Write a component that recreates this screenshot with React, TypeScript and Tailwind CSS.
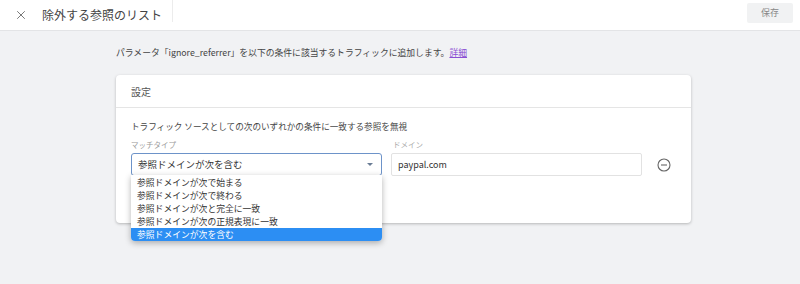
import { X } from "lucide-react";

const options = [
  "参照ドメインが次で始まる",
  "参照ドメインが次で終わる",
  "参照ドメインが次と完全に一致",
  "参照ドメインが次の正規表現に一致",
  "参照ドメインが次を含む",
];

export default function App() {
  return (
    <div
      className="w-[800px] h-[284px] bg-[#f1f2f4] text-[#3c4043] overflow-hidden"
      style={{ fontFamily: '"Noto Sans CJK JP", "Noto Sans", sans-serif' }}
    >
      {/* Header */}
      <div className="h-[31px] bg-white border-b border-[#e3e4e6] flex items-center">
        <X className="ml-[14px] w-[14px] h-[14px] text-[#666]" strokeWidth={1.5} />
        <div className="ml-[14px] text-[12px] text-[#444] leading-none">除外する参照のリスト</div>
        <div className="ml-[10px] w-px h-[22px] self-start bg-[#ececec]" />
        <div className="flex-1" />
        <button className="mr-[7px] w-[46px] h-[20px] mb-[5px] bg-[#f1f2f3] rounded-[2px] text-[9px] text-[#888]">
          保存
        </button>
      </div>

      {/* Body */}
      <div className="pl-[116px] pr-[109px]">
        <div className="pt-[15px] text-[8.8px] leading-[14px] text-[#444]">
          パラメータ「ignore_referrer」を以下の条件に該当するトラフィックに追加します。
          <span className="text-[#8a4fd3] underline">詳細</span>
        </div>

        <div className="mt-[15px] bg-white rounded-[4px] shadow-[0_1px_3px_rgba(0,0,0,0.25)] h-[148px]">
          <div className="h-[33px] border-b border-[#e5e5e5] pl-[15px] flex items-center text-[10px] text-[#555]">
            設定
          </div>
          <div className="pl-[15px] pt-[12px]">
            <div className="text-[8.6px] leading-[13px] text-[#444]">
              トラフィック ソースとしての次のいずれかの条件に一致する参照を無視
            </div>
            <div className="mt-[7px] flex items-start">
              <div className="w-[251px]">
                <div className="text-[7.5px] leading-[10px] text-[#999]">マッチタイプ</div>
                <div className="relative mt-[3px]">
                  <div className="h-[23px] border border-[#6d93c9] rounded-[3px] flex items-center pl-[6px] pr-[8px] text-[9.5px] text-[#333]">
                    <span className="flex-1">参照ドメインが次を含む</span>
                    <span className="w-0 h-0 border-l-[3px] border-r-[3px] border-t-[3px] border-l-transparent border-r-transparent border-t-[#6a7d95]" />
                  </div>
                  <div className="absolute left-0 top-[22px] w-[251px] bg-white rounded-b-[4px] shadow-[0_2px_6px_rgba(0,0,0,0.3)] pt-[1px] z-10">
                    {options.map((o, i) => (
                      <div
                        key={o}
                        className={
                          i === options.length - 1
                            ? "h-[13px] pl-[6px] text-[8.8px] leading-[13px] bg-[#2c8ef3] text-white rounded-b-[4px]"
                            : "h-[13px] pl-[6px] text-[8.8px] leading-[13px] text-[#333]"
                        }
                      >
                        {o}
                      </div>
                    ))}
                  </div>
                </div>
              </div>
              <div className="ml-[9px] w-[251px]">
                <div className="text-[7.5px] leading-[10px] text-[#aaa] pl-[2px]">ドメイン</div>
                <div className="mt-[3px] h-[23px] border border-[#e2e2e2] rounded-[2px] flex items-center pl-[6px] text-[9px] text-[#333]">
                  paypal.com
                </div>
              </div>
              <div className="ml-[15px] mt-[18px]">
                <svg width="14" height="14" viewBox="0 0 14 14" fill="none" stroke="#666" strokeWidth="1.1">
                  <circle cx="7" cy="7" r="6" />
                  <line x1="4" y1="7" x2="10" y2="7" />
                </svg>
              </div>
            </div>
          </div>
        </div>
      </div>
    </div>
  );
}
